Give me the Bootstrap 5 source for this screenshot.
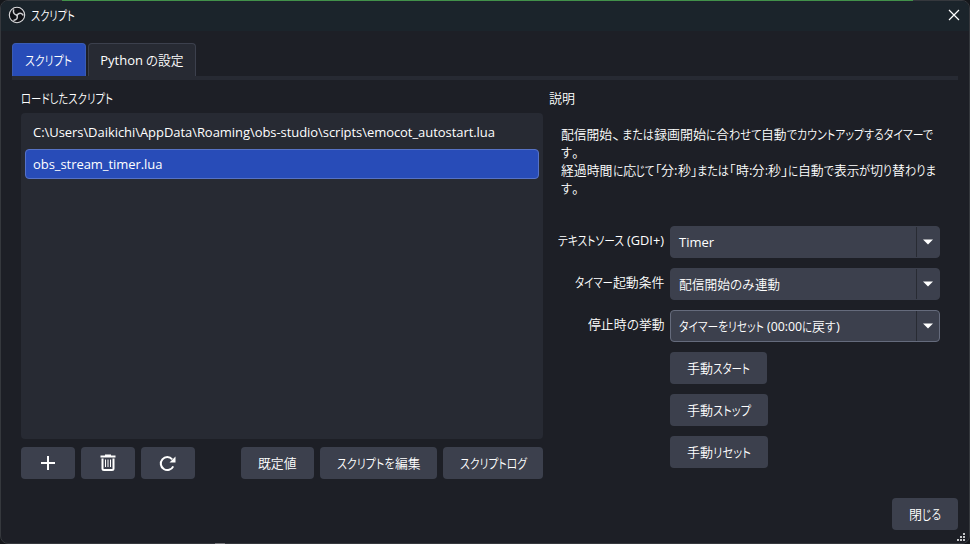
<!DOCTYPE html>
<html lang="ja">
<head>
  <meta charset="UTF-8" />
  <title>スクリプト</title>
  <link rel="stylesheet" href="https://cdn.jsdelivr.net/npm/bootstrap@5.3.2/dist/css/bootstrap.min.css" />
  <style>
    body { width: 970px; height: 544px; overflow: hidden; background: #15171b; color: #fff;
      font-family: "Open Sans", "Noto Sans CJK JP", sans-serif; font-size: 13px; line-height: 18px; font-feature-settings: "palt"; }
    .topline { left: 62px; top: 0; width: 851px; height: 1px; background: #42914a; }
    .taskmark { left: 215px; bottom: 0; width: 10px; height: 1px; background: #77777b; }
    .window { width: 970px; height: 544px; background: #1d1f26; border: 1px solid #35383d; border-radius: 8px; }
    .titlebar { height: 30px; padding: 0 9px 2px 7px; background: #1b242b; border-radius: 7px 7px 0 0; }
    .title-text { margin-left: 5px; }
    .main-area { padding: 12px 11px 0; }
    .tabs { gap: 2px; }
    .tab { height: 33px; border: 1px solid #3c404d; border-bottom: 0; border-radius: 4px 4px 0 0; background: #272a33; }
    .tab.on { background: #284cb8; border-color: #3a5cb4; }
    .tab1 { width: 74px; padding-right: 2px; }
    .tab2 { width: 108px; }
    .tabline { height: 4px; background: #272a33; }
    .left { width: 522px; margin-left: 9px; }
    .right { width: 391px; margin-left: 6px; }
    .heading { height: 33px; padding-top: 9px; }
    .scripts { height: 326px; background: #272a33; border-radius: 4px; padding: 4px; }
    .script { height: 30px; padding: 0 7px; border: 1px solid transparent; border-radius: 4px; letter-spacing: -.055px; }
    .script.on { background: #284cb8; border-color: #5672c6; margin-top: 2px; }
    .btns { gap: 6px; }
    .btn-o { height: 32px; background: #3c404d; border-radius: 4px; white-space: nowrap; }
    .w-icon { width: 54px; }
    .w-def { width: 73px; }
    .w-edit { width: 117px; }
    .w-log { width: 100px; }
    .w-start { width: 97px; }
    .w-stop { width: 98px; }
    .w-close { width: 66px; }
    .desc { height: 113px; padding: 12px 0 0 12px; white-space: nowrap; }
    .prop { height: 32px; margin-bottom: 10px; }
    .prop-label { width: 115px; padding-bottom: 4px; white-space: nowrap; }
    .combo { width: 270px; height: 32px; background: #3c404d; border: 1px solid #3c404d; border-radius: 4px; }
    .combo.on { border-color: #656b7c; }
    .combo-text { padding-left: 8px; white-space: nowrap; }
    .combo-arrow { width: 23px; height: 30px; border-left: 1px solid #282b33; }
    .manual { padding-left: 121px; gap: 10px; }
    .k { display: inline-block; transform-origin: 0 50%; white-space: nowrap; font-family: "Noto Sans CJK JP", "Open Sans", sans-serif; font-weight: 350; line-height: 18px; }
    .k.latin { font-family: "Open Sans", sans-serif; font-weight: 400; }
    .bottom { margin-top: 19px; }
    .grip { right: 3px; bottom: 1px; }
    .window svg { display: block; }
  </style>
</head>
<body>
  <div class="window position-relative">
    <div class="titlebar d-flex align-items-center justify-content-between">
      <div class="d-flex align-items-center">
        <svg width="18" height="18" viewBox="0 0 18 18"><circle cx="9" cy="9" r="7.7" fill="#101115" stroke="#dcdcde" stroke-width="1.1"/><g fill="none" stroke="#cfcfd2" stroke-width="1.5" stroke-linecap="round"><path d="M9 9.200C6.200 8.600 4.800 6.800 5.600 4"/><path d="M9 9.200C10.800 6.600 13.300 6.500 15 9"/><path d="M9 9.200C10 11.900 8.800 13.900 6 14.200"/></g></svg>
        <span class="title-text"><span class="k" data-w="44">スクリプト</span></span>
      </div>
      <svg width="12" height="12" viewBox="0 0 12 12"><path d="M1 1L11 11M11 1L1 11" stroke="#fff" stroke-width="1.2"/></svg>
    </div>
    <div class="main-area">
      <div class="tabs d-flex">
        <div class="tab tab1 on d-flex align-items-center justify-content-center"><span class="k" data-w="47">スクリプト</span></div>
        <div class="tab tab2 d-flex align-items-center justify-content-center"><div>Python <span class="k" data-w="12">の</span><span class="k" data-w="25.500">設定</span></div></div>
      </div>
      <div class="tabline"></div>
      <div class="d-flex">
        <div class="left">
          <div class="heading"><span class="k" data-w="92">ロードしたスクリプト</span></div>
          <div class="scripts">
            <div class="script d-flex align-items-center">C:\Users\Daikichi\AppData\Roaming\obs-studio\scripts\emocot_autostart.lua</div>
            <div class="script on d-flex align-items-center">obs_stream_timer.lua</div>
          </div>
          <div class="d-flex mt-2 justify-content-between">
            <div class="d-flex btns">
              <div class="btn-o w-icon d-flex align-items-center justify-content-center"><svg width="16" height="16" viewBox="0 0 16 16"><path d="M8 1V15M1 8H15" stroke="#fff" stroke-width="2"/></svg></div>
              <div class="btn-o w-icon d-flex align-items-center justify-content-center"><svg width="16" height="18" viewBox="0 0 16 18"><path d="M.5 2.500H15.500M5 1.500H11" stroke="#fff" stroke-width="1.800"/><path d="M2.500 4.500V14.500Q2.500 16 4 16H12Q13.500 16 13.500 14.500V4.500" fill="none" stroke="#fff" stroke-width="2"/><path d="M5.500 5.500V13M8 5.500V13M10.500 5.500V13" stroke="#fff"/></svg></div>
              <div class="btn-o w-icon d-flex align-items-center justify-content-center"><svg width="18" height="17" viewBox="0 0 18 17"><path d="M14.200 11.300A6.500 6.500 0 1 1 13.200 4.300" fill="none" stroke="#fff" stroke-width="2"/><path d="M16.500 1.500V7.500H10.500Z" fill="#fff"/></svg></div>
            </div>
            <div class="d-flex btns">
              <div class="btn-o w-def d-flex align-items-center justify-content-center"><span class="k" data-w="38.500">既定値</span></div>
              <div class="btn-o w-edit d-flex align-items-center justify-content-center"><span class="k" data-w="57.500">スクリプトを</span><span class="k" data-w="25.500">編集</span></div>
              <div class="btn-o w-log d-flex align-items-center justify-content-center"><span class="k" data-w="67">スクリプトログ</span></div>
            </div>
          </div>
        </div>
        <div class="right">
          <div class="heading"><span class="k" data-w="26">説明</span></div>
          <div class="desc">
            <div><span class="k" data-w="51">配信開始</span><span class="k" data-w="9.500">、</span><span class="k" data-w="32">または</span><span class="k" data-w="52">録画開始</span><span class="k" data-w="10">に</span><span class="k" data-w="13">合</span><span class="k" data-w="32.500">わせて</span><span class="k" data-w="25.500">自動</span><span class="k" data-w="146">でカウントアップするタイマーで</span></div>
            <div><span class="k" data-w="11">す</span>。</div>
            <div><span class="k" data-w="51.500">経過時間</span><span class="k" data-w="10.200">に</span><span class="k" data-w="13.300">応</span><span class="k" data-w="18.500">じて</span><span class="k" data-w="6.500">「</span><span class="k" data-w="13">分</span><span class="k latin" data-w="3.500">:</span><span class="k" data-w="13">秒</span><span class="k" data-w="6.500">」</span><span class="k" data-w="32">または</span><span class="k" data-w="6.500">「</span><span class="k" data-w="13">時</span><span class="k latin" data-w="3.500">:</span><span class="k" data-w="12.500">分</span><span class="k latin" data-w="3">:</span><span class="k" data-w="13">秒</span><span class="k" data-w="7.500">」</span><span class="k" data-w="10">に</span><span class="k" data-w="25.700">自動</span><span class="k" data-w="10">で</span><span class="k" data-w="25.500">表示</span><span class="k" data-w="11">が</span><span class="k" data-w="13">切</span><span class="k" data-w="9">り</span><span class="k" data-w="13">替</span><span class="k" data-w="31">わりま</span></div>
            <div><span class="k" data-w="11">す</span>。</div>
          </div>
          <div class="prop d-flex">
            <div class="prop-label d-flex align-items-center justify-content-end"><span class="k" data-w="66">テキストソース</span>&nbsp;<span class="k latin" data-w="37">(GDI+)</span></div>
            <div class="combo d-flex align-items-center justify-content-between ms-auto">
              <span class="combo-text">Timer</span>
              <div class="combo-arrow d-flex align-items-center justify-content-center"><svg width="10" height="6" viewBox="0 0 10 6"><path d="M0 .5H10L5 5.500Z" fill="#fff"/></svg></div>
            </div>
          </div>
          <div class="prop d-flex">
            <div class="prop-label d-flex align-items-center justify-content-end"><span class="k" data-w="38">タイマー</span><span class="k" data-w="51.500">起動条件</span></div>
            <div class="combo d-flex align-items-center justify-content-between ms-auto">
              <div class="combo-text"><span class="k" data-w="51">配信開始</span><span class="k" data-w="24.500">のみ</span><span class="k" data-w="25">連動</span></div>
              <div class="combo-arrow d-flex align-items-center justify-content-center"><svg width="10" height="6" viewBox="0 0 10 6"><path d="M0 .5H10L5 5.500Z" fill="#fff"/></svg></div>
            </div>
          </div>
          <div class="prop d-flex">
            <div class="prop-label d-flex align-items-center justify-content-end"><span class="k" data-w="38.500">停止時</span><span class="k" data-w="12">の</span><span class="k" data-w="25.500">挙動</span></div>
            <div class="combo on d-flex align-items-center justify-content-between ms-auto">
              <div class="combo-text"><span class="k" data-w="85">タイマーをリセット</span> <span class="k latin" data-w="35">(00:00</span><span class="k" data-w="10">に</span><span class="k" data-w="13">戻</span><span class="k" data-w="10.500">す</span>)</div>
              <div class="combo-arrow d-flex align-items-center justify-content-center"><svg width="10" height="6" viewBox="0 0 10 6"><path d="M0 .5H10L5 5.500Z" fill="#fff"/></svg></div>
            </div>
          </div>
          <div class="manual d-flex flex-column">
            <div class="btn-o w-start d-flex align-items-center justify-content-center"><span class="k" data-w="26">手動</span><span class="k" data-w="37">スタート</span></div>
            <div class="btn-o w-stop d-flex align-items-center justify-content-center"><span class="k" data-w="26">手動</span><span class="k" data-w="38">ストップ</span></div>
            <div class="btn-o w-stop d-flex align-items-center justify-content-center"><span class="k" data-w="26">手動</span><span class="k" data-w="38">リセット</span></div>
          </div>
        </div>
      </div>
      <div class="bottom d-flex justify-content-end">
        <div class="btn-o w-close d-flex align-items-center justify-content-center"><span class="k" data-w="13">閉</span><span class="k" data-w="19">じる</span></div>
      </div>
    </div>
    <svg class="grip position-absolute" width="9" height="9" viewBox="0 0 9 9" fill="#c4c5c8"><path d="M6 0h2v2h-2zM3 3h2v2h-2zM6 3h2v2h-2zM0 6h2v2h-2zM3 6h2v2h-2zM6 6h2v2h-2z"/></svg>
  </div>
  <div class="topline position-absolute"></div>
  <div class="taskmark position-absolute"></div>
  <script src="https://cdn.jsdelivr.net/npm/bootstrap@5.3.2/dist/js/bootstrap.bundle.min.js"></script>
  <script>
    // condense each run of glyphs to its UI width
    document.querySelectorAll('.k').forEach(el => {
      const w = el.getBoundingClientRect().width;
      const target = parseFloat(el.dataset.w);
      el.style.transform = `scaleX(${target / w})`;
      el.style.marginRight = `${target - w}px`;
    });
  </script>
</body>
</html>
